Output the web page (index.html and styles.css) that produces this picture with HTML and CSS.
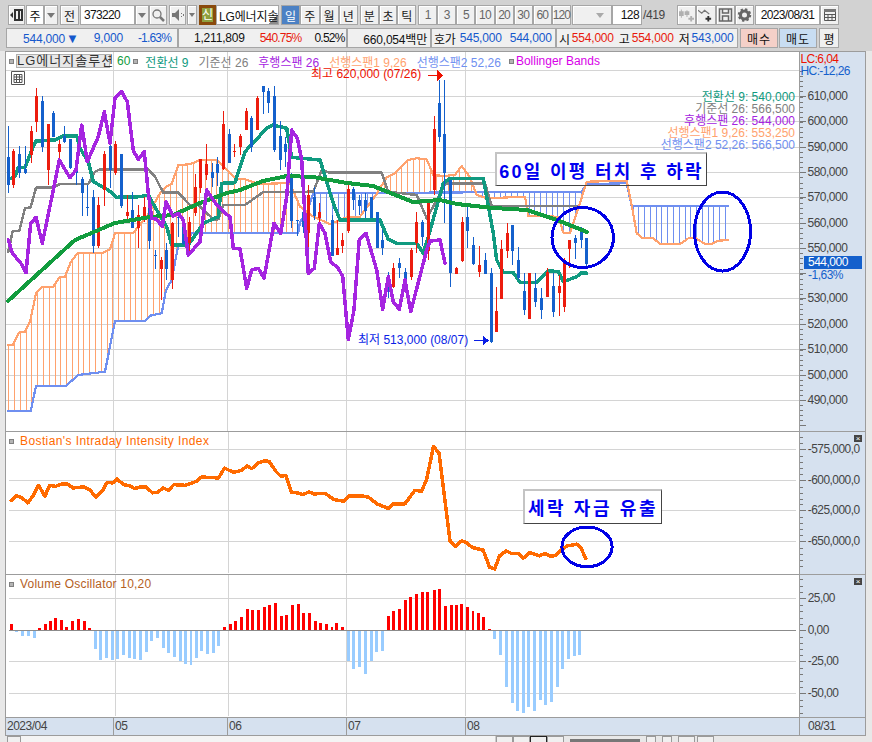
FILE: index.html
```html
<!DOCTYPE html>
<html lang="ko">
<head>
<meta charset="utf-8">
<title>LG에너지솔루션 차트</title>
<link rel="stylesheet" href="styles.css">
</head>
<body>
<div class="app">
  <header class="top">
    <div class="toolbar">
      <button class="btn w17"><svg class="ico" viewBox="0 0 14 14"><path class="i-dark" d="M4 1h9v12H4zM6 3v8h2V3zM10 3v8h1V3zM0 7l3-3v6z"/></svg></button>
      <div class="combo ml1">
        <span class="field w18 center">주</span><span class="btn w14"><i class="caret"></i></span>
      </div>
      <button class="btn w19 ml2">전</button>
      <div class="combo ml1">
        <span class="field w55 code">373220</span><span class="btn w14"><i class="caret"></i></span>
        <button class="btn w18"><svg class="ico" viewBox="0 0 14 14"><circle class="i-line" cx="6" cy="6" r="4"/><path class="i-line thick" d="M9 9l4 4"/></svg></button>
      </div>
      <button class="btn w17 ml2"><svg class="ico" viewBox="0 0 14 14"><path class="i-gray" d="M1 5h3l4-4v12L4 9H1zM10 5h1v1h-1zM10 8h1v1h-1zM12 6h1v2h-1z"/></svg></button>
      <button class="btn w10 ml1"><i class="caret small"></i></button>
      <button class="new-badge ml2">신</button>
      <span class="field name">LG에너지솔</span>
      <div class="seg w77 ml2">
        <button class="btn on">일</button><button class="btn">주</button><button class="btn">월</button><button class="btn">년</button>
      </div>
      <div class="seg w56 ml2">
        <button class="btn">분</button><button class="btn">초</button><button class="btn">틱</button>
      </div>
      <div class="seg w153 ml2 num">
        <button class="btn">1</button><button class="btn">3</button><button class="btn">5</button><button class="btn">10</button><button class="btn">20</button><button class="btn">30</button><button class="btn">60</button><button class="btn">120</button>
      </div>
      <span class="btn w40 ml1 end"><i class="caret light"></i></span>
      <span class="field w30 right">128</span>
      <span class="count">/419</span>
      <div class="seg w77 icons">
        <button class="btn"><svg class="ico" viewBox="0 0 16 14"><path class="i-faint" d="M2 1h1v2h2v5H3v2H2V8H0V3h2zM8 2h1v1h2v4H9v2H8V7H6V3h2zM12 8h2v2h2v2h-2v2h-2v-2h-2v-2h2z"/></svg></button>
        <button class="btn"><svg class="ico" viewBox="0 0 16 14"><path class="i-line" d="M0 2l4 3 3-3 5 4"/><path class="i-dark" d="M10 8h2v2h2v2h-2v2h-2v-2H8v-2h2z"/></svg></button>
        <button class="btn"><svg class="ico" viewBox="0 0 14 14"><path class="i-disk" d="M1 1h12v12H1zM4 1v4h6V1M4 13V8h6v5"/></svg></button>
        <button class="btn"><svg class="ico" viewBox="0 0 14 14"><circle class="i-gear" cx="7" cy="7" r="4"/><circle class="i-teeth" cx="7" cy="7" r="5.5"/></svg></button>
      </div>
      <span class="field date ml1">2023/08/31</span>
      <button class="btn w19"><svg class="ico" viewBox="0 0 14 14"><path class="i-cal" d="M1.500 3.500h11v9h-11zM1.500 6.500h11M5 6.500v6M9 6.500v6M1.500 9.500h11"/><path class="i-gray" d="M1 1h12v3H1z"/></svg></button>
    </div>
    <div class="quote">
      <div class="cell c1">
        <span class="blue">544,000<i class="down">▼</i></span><span class="blue">9,000</span><span class="blue pct">-1.63%</span>
      </div>
      <div class="cell c2">
        <span>1,211,809</span><span class="red pct">540.75%</span><span class="pct">0.52%</span>
      </div>
      <div class="cell c3"><span>660,054백만</span></div>
      <div class="cell c4"><span>호가</span><span class="blue">545,000</span><span class="blue">544,000</span></div>
      <div class="cell c5">
        <span>시</span><span class="red">554,000</span><span class="mark">고</span><span class="red">554,000</span><span class="mark">저</span><span class="blue">543,000</span>
      </div>
      <button class="trade buy">매수</button>
      <button class="trade sell">매도</button>
      <button class="trade avg">평</button>
    </div>
  </header>

  <main class="chart">
    <section class="plot price-plot">
      <svg id="price" class="canvas" viewBox="6 52 793 379"></svg>
      <div class="legend">
        <i class="sq"></i><span class="stock">LG에너지솔루션</span>
        <span class="c-green">60</span><i class="sq"></i>
        <span class="c-teal">전환선 9</span>
        <span class="c-gray">기준선 26</span>
        <span class="c-purple">후행스팬 26</span>
        <span class="c-orange">선행스팬1 9,26</span>
        <span class="c-blue">선행스팬2 52,26</span>
        <i class="sq sq-last"></i><span class="c-magenta">Bollinger Bands</span>
      </div>
      <span class="table-icon"><svg viewBox="0 0 14 14"><path class="i-cal" d="M.5.500h13v13H.500zM3 3.500h8v8H3zM3 6h8M3 8.500h8M5.500 3.500v8M8.500 3.500v8"/></svg></span>
      <div class="callout call-a">60일 이평 터치 후 하락</div>
    </section>
    <aside class="axis">
      <svg id="priceAxis" class="canvas" viewBox="800 52 65 379"></svg>
      <span class="price-tag">544,000</span>
    </aside>

    <section class="plot">
      <svg id="bii" class="canvas" viewBox="6 431 793 143"></svg>
      <div class="legend small"><i class="sq"></i><span class="c-bii">Bostian's Intraday Intensity Index</span></div>
      <div class="callout call-b">세락 자금 유출</div>
    </section>
    <aside class="axis">
      <svg id="biiAxis" class="canvas" viewBox="800 431 65 143"></svg>
      <span class="close">×</span>
    </aside>

    <section class="plot">
      <svg id="vo" class="canvas" viewBox="6 574 793 143"></svg>
      <div class="legend small"><i class="sq"></i><span class="c-vo">Volume Oscillator 10,20</span></div>
    </section>
    <aside class="axis">
      <svg id="voAxis" class="canvas" viewBox="800 574 65 143"></svg>
      <span class="close">×</span>
    </aside>

    <div class="dates">
      <span class="d0">2023/04</span><span class="d1">05</span><span class="d2">06</span><span class="d3">07</span><span class="d4">08</span>
    </div>
    <div class="date-end">08/31</div>
  </main>

  <footer class="status">
    <span class="s-btn w14"></span>
    <span class="track"></span>
    <span class="s-btn w17"></span><span class="s-btn w17"></span><span class="s-btn w17 dark"></span><span class="s-btn w17"></span>
    <span class="slider"></span>
    <span class="s-btn w10 ml6"></span><span class="s-btn w10 ml6"></span><span class="s-btn w17 ml6"></span><span class="s-btn w17 ml2"></span>
  </footer>
</div>
<script src="chart.js"></script>
</body>
</html>
```

FILE: styles.css
```css
* { box-sizing: border-box; }
html, body { margin: 0; padding: 0; }
body {
  width: 872px;
  height: 742px;
  overflow: hidden;
  background: #e8e8e8;
  font-family: "Liberation Sans", "Noto Sans CJK KR", sans-serif;
  font-size: 12px;
  color: #111;
}
button { font: inherit; color: inherit; padding: 0; margin: 0; }
.app { width: 872px; height: 742px; display: flex; flex-direction: column; }

/* top */
.top { height: 51px; background: #d2d2d2; padding: 5px 0 0 8px; }
.toolbar { display: flex; height: 20px; align-items: stretch; }
.btn {
  display: flex; align-items: center; justify-content: center;
  height: 100%;
  background: #f0f0f0;
  border: 1px solid #a6a6a6;
  box-shadow: inset 1px 1px 0 #fff;
  color: #222;
  font-size: 12px;
  white-space: nowrap;
}
.field {
  display: flex; align-items: center;
  background: #fff;
  border: 1px solid #a6a6a6;
  white-space: nowrap;
  overflow: hidden;
}
.combo { display: flex; }
.center { justify-content: center; }
.right { justify-content: flex-end; padding-right: 2px; letter-spacing: -.6px; }
.end { justify-content: flex-end; padding-right: 7px; }
.code { padding-left: 3px; letter-spacing: -.65px; }
.ml1 { margin-left: 1px; }
.ml2 { margin-left: 2px; }
.ml6 { margin-left: 6px; }
.w10 { width: 10px; } .w14 { width: 14px; } .w17 { width: 17px; } .w18 { width: 18px; }
.w19 { width: 19px; } .w30 { width: 30px; } .w40 { width: 40px; } .w55 { width: 55px; }
.w56 { width: 56px; } .w77 { width: 77px; } .w153 { width: 153px; }
.seg { display: flex; height: 100%; }
.seg .btn { flex: 1 1 0; min-width: 0; }
.seg.num .btn { color: #666; letter-spacing: -.8px; }
.seg .on { background: #4c81c4; color: #fff; box-shadow: none; }
.caret {
  width: 0; height: 0;
  border-left: 4.500px solid transparent;
  border-right: 4.500px solid transparent;
  border-top: 5px solid #777;
}
.caret.small { border-left-width: 3.500px; border-right-width: 3.500px; border-top-width: 4px; }
.caret.light { border-top-color: #aaa; }
.ico { width: 14px; height: 14px; display: block; flex: none; }
.icons .ico { width: 15px; height: 14px; }
.i-dark { fill: #333; }
.i-gray { fill: #777; }
.i-faint { fill: #b0b0b0; }
.i-line { fill: none; stroke: #777; stroke-width: 1.300; }
.i-line.thick { stroke-width: 2.500; }
.i-disk { fill: none; stroke: #666; stroke-width: 1.500; }
.i-cal { fill: none; stroke: #555; stroke-width: 1; }
.i-gear { fill: none; stroke: #666; stroke-width: 3; }
.i-teeth { fill: none; stroke: #666; stroke-width: 2.500; stroke-dasharray: 2.200 2.100; }
.new-badge {
  width: 17px;
  background: #8f9f3e;
  border: 3px solid #8a4a0c;
  color: #fff;
  display: flex; align-items: center; justify-content: center;
  line-height: 1;
  font-size: 12px;
}
.name {
  width: 63px; padding-left: 2px; letter-spacing: -.15px;
  background: linear-gradient(135deg, #fff 88%, #8a8a8a 88%);
}
.count { width: 35px; padding-left: 1px; display: flex; align-items: center; color: #444; letter-spacing: -.4px; }
.date { width: 65px; justify-content: center; letter-spacing: -.65px; }

.quote { display: flex; height: 20px; margin: 3px 0 0 -2px; }
.cell {
  display: flex; align-items: center;
  height: 100%;
  background: #f0f0f0;
  border: 1px solid #a6a6a6;
  letter-spacing: -.2px;
  white-space: nowrap;
  overflow: hidden;
}
.blue { color: #1558cc; }
.red { color: #e8190c; }
.pct { letter-spacing: -.8px; }
.down { font-style: normal; font-size: 13px; letter-spacing: 0; margin-left: 1px; }
.c1 { width: 172px; padding-left: 16px; gap: 15px; }
.c2 { width: 169px; padding-left: 15px; gap: 15px; }
.c2 .pct:last-child { margin-left: -2px; }
.c3 { width: 84px; justify-content: flex-end; padding-right: 3px; }
.c4 { width: 125px; padding-left: 2px; gap: 4px; }
.c4 span:last-child { margin-left: 4px; }
.c5 { width: 182px; padding-left: 2px; gap: 2px; }
.mark { margin-left: 3px; }
.trade {
  height: 100%;
  border: 1px solid #a6a6a6;
  margin-left: 2px;
  letter-spacing: 1px;
}
.buy { width: 38px; background: #f5d0c8; }
.sell { width: 38px; margin-left: 1px; background: #c8ddf2; }
.avg { width: 20px; background: #f0f0f0; margin-left: 2px; letter-spacing: 0; }

/* chart */
.chart {
  width: 861px;
  height: 685px;
  margin-left: 5px;
  background: #fff;
  border: 1px solid #9c9c9c;
  border-bottom-width: 1px;
  display: grid;
  grid-template-columns: 793px 66px;
  grid-template-rows: 379px 143px 143px 18px;
}
.plot { position: relative; overflow: hidden; background: #fff; }
.plot + .axis + .plot { border-top: 1px solid #9c9c9c; }
.plot + .axis + .plot .canvas { margin-top: -1px; }
.axis {
  position: relative;
  overflow: hidden;
  background: #d6e1ef;
  border-left: 1px solid #9c9c9c;
}
.plot + .axis + .plot + .axis { border-top: 1px solid #9c9c9c; }
.plot + .axis + .plot + .axis .canvas { margin-top: -1px; }
.canvas { display: block; width: 100%; height: 100%; shape-rendering: crispEdges; }
.plot .canvas { height: 100%; }

.legend {
  position: absolute; left: 3px; top: 2px;
  display: flex; align-items: center; gap: 10px;
  height: 14px;
  white-space: nowrap;
}
.legend.small { top: 2px; gap: 9px; }
.sq { width: 5px; height: 5px; background: #b4b4b4; border: 1px solid #808080; flex: none; margin-right: -3px; }
.sq-last { margin-left: -2px; }
.stock {
  height: 14px; width: 94px;
  margin-left: -5px;
  background: #e8e8e8;
  border: 1px solid #b0b0b0;
  font-size: 13px;
  line-height: 12px;
  letter-spacing: 1px;
  text-align: center;
  color: #333;
}
.c-green { color: #129c3e; margin-left: -3px; margin-right: -7px; }
.c-teal { color: #109a80; }
.c-gray { color: #808080; }
.c-purple { color: #a524e0; }
.c-orange { color: #ffa26e; }
.c-blue { color: #6f8ff0; }
.c-magenta { color: #d800e8; margin-left: -5px; }
.c-bii { color: #ff6a00; letter-spacing: .4px; }
.c-vo { color: #b4601e; letter-spacing: .2px; }
.table-icon { position: absolute; left: 5px; top: 19px; width: 14px; height: 14px; }
.table-icon svg { display: block; width: 100%; height: 100%; }
.callout {
  position: absolute;
  display: flex; align-items: center; justify-content: center;
  border: 2px solid #c4c4c4;
  border-right: 1px solid #444;
  border-bottom: 1px solid #444;
  color: #0000f0;
  font-weight: 700;
  font-size: 18px;
  letter-spacing: 2.300px;
  white-space: nowrap;
}
.call-a { left: 489px; top: 100px; width: 212px; height: 34px; }
.call-b { left: 517px; top: 57px; width: 139px; height: 35px; background: #fff; letter-spacing: 2.600px; }
.price-tag {
  position: absolute; left: 4px; top: 204px;
  width: 58px; height: 13px;
  background: #1460cc; color: #fff;
  line-height: 13px;
  padding-left: 4px;
  letter-spacing: -.5px;
}
.close {
  position: absolute; right: 3px; top: 3px;
  width: 8px; height: 7px;
  background: #444; color: #fff;
  font-size: 8px; line-height: 7px; text-align: center;
}
.dates {
  position: relative;
  background: #d6e1ef;
  border-top: 1px solid #9c9c9c;
  color: #444;
  letter-spacing: -.5px;
  line-height: 17px;
}
.dates span { position: absolute; top: 0; height: 17px; padding-left: 1px; border-left: 1px solid #9c9c9c; }
.dates .d0 { left: 0; border-left: 0; }
.dates .d1 { left: 107px; }
.dates .d2 { left: 221px; }
.dates .d3 { left: 340px; }
.dates .d4 { left: 459px; }
.date-end {
  background: #d6e1ef;
  border-top: 1px solid #9c9c9c;
  border-left: 1px solid #9c9c9c;
  color: #444;
  padding-left: 8px;
  letter-spacing: -.5px;
  line-height: 17px;
}

/* status */
.status {
  height: 6px; overflow: hidden;
  display: flex; align-items: flex-start;
  padding-left: 7px;
  background: #e8e8e8;
}
.s-btn { height: 8px; background: #f0f0f0; border: 1px solid #9a9a9a; flex: none; }
.s-btn.dark { background: #eee; border-color: #222; }
.track { width: 475px; height: 6px; background: #f4f4f4; border-right: 1px solid #ccc; flex: none; }
.slider { width: 70px; height: 3px; margin: 3px 0 0 6px; background: #777; flex: none; }

/* svg marks */
.grid { stroke: #d4d4d4; stroke-width: 1; fill: none; }
.call-bg { fill: #fff; }
.zero { stroke: #8a8a8a; stroke-width: 1; }
.hatch-o { stroke: #ffa26e; stroke-width: 1; }
.hatch-b { stroke: #6f8ff0; stroke-width: 1; }
.ln { fill: none; stroke-linejoin: round; stroke-linecap: round; }
.ln-orange { stroke: #ffa26e; stroke-width: 2.200; }
.ln-blue { stroke: #6f8ff0; stroke-width: 2.200; }
.ln-gray { stroke: #808080; stroke-width: 2.500; }
.ln-teal { stroke: #109a80; stroke-width: 3.500; }
.ln-green { stroke: #119c3e; stroke-width: 4; }
.ln-purple { stroke: #a524e0; stroke-width: 3.500; }
.ln-bii { stroke: #ff6a00; stroke-width: 3.500; }
.ring { fill: none; stroke: #0000e6; stroke-width: 3; }
.up { fill: #ec1c0e; stroke: #ec1c0e; stroke-width: 0; }
.dn { fill: #1460cc; stroke: #1460cc; stroke-width: 0; }
.vo-r { fill: #ff0000; }
.vo-b { fill: #99ccff; }
.t { font-size: 12px; font-family: "Liberation Sans", "Noto Sans CJK KR", sans-serif; }
.t-red { fill: #ee1100; }
.t-blu { fill: #0a1ee6; }
.t-end { text-anchor: end; }
.f-teal { fill: #109a80; } .f-gray { fill: #808080; } .f-purple { fill: #a524e0; }
.f-orange { fill: #ffa26e; } .f-blue { fill: #6f8ff0; }
.tick { stroke: #777; stroke-width: 1; }
.ax { fill: #444; letter-spacing: -.5px; }
.ax-lc { fill: #ee1100; letter-spacing: -.6px; }
.ax-hc { fill: #1460cc; letter-spacing: -.6px; }
.ax-pct { fill: #1460cc; letter-spacing: -.5px; }
.arrow { fill: #ee1100; }
.arrow-b { fill: #0a1ee6; }
.arrow-line { stroke: #ee1100; stroke-width: 1.500; }
.arrow-line-b { stroke: #0a1ee6; stroke-width: 1; }
```

FILE: chart.js
```js
const NS = 'http://www.w3.org/2000/svg';
function add(svg, tag, attrs, text) {
  const el = document.createElementNS(NS, tag);
  for (const k in attrs) el.setAttribute(k, attrs[k]);
  if (text !== undefined) el.textContent = text;
  svg.appendChild(el);
  return el;
}
const zoom = (ox, oy, pts) => pts.map(([x, y]) => [ox + x / 3, oy + y / 3]);
const A = pts => zoom(0, 80, pts);      // left half of the price pane
const B = pts => zoom(280, 80, pts);    // middle of the price pane
const C = pts => zoom(570, 150, pts);   // right end of the cloud
const line = (svg, pts, cls) =>
  add(svg, 'polyline', { class: 'ln ' + cls, points: pts.map(p => p[0].toFixed(1) + ',' + p[1].toFixed(1)).join(' ') });
const yAt = (pts, x) => {
  for (let i = 1; i < pts.length; i++) {
    if (x <= pts[i][0]) {
      const [x0, y0] = pts[i - 1], [x1, y1] = pts[i];
      return y0 + (y1 - y0) * (x - x0) / (x1 - x0 || 1);
    }
  }
  return null;
};

const GRID_X = [113.5, 227.5, 346.5, 465.5];
function grid(svg, ys, top, bottom) {
  GRID_X.forEach(x => add(svg, 'line', { class: 'grid', x1: x, x2: x, y1: top, y2: bottom }));
  ys.forEach(y => add(svg, 'line', { class: 'grid', x1: 6, x2: 799, y1: y, y2: y }));
}
function axis(svg, first, step, count, minor, top, bottom, labels) {
  for (let y = first - minor * 20; y < bottom; y += minor) {
    if (y > top) add(svg, 'line', { class: 'tick', x1: 800, x2: 803, y1: Math.round(y) + .5, y2: Math.round(y) + .5 });
  }
  labels.forEach(([y, t]) => {
    add(svg, 'line', { class: 'tick', x1: 800, x2: 806, y1: y, y2: y });
    if (t) add(svg, 'text', { class: 't ax', x: 807.5, y: y + 3.5 }, t);
  });
}

/* ---------- price pane ---------- */
const price = document.getElementById('price');
const PRICE_Y = [70.5, 96.5, 121.5, 147.5, 172.5, 197.5, 223.5, 248.5, 273.5, 298.5, 324.5, 349.5, 375.5, 400.5];
grid(price, PRICE_Y, 52, 431);
add(price, 'rect', { class: 'call-bg', x: 495, y: 152, width: 212, height: 34 });

const orange = [...A([[25,795],[38,795],[58,757],[75,755],[90,725],[108,640],[127,620],[160,620],[180,590],[195,590],[212,547],[232,520],[310,518],[330,508],[345,460],[400,458],[440,410],[480,340],[498,320],[515,312],[535,255],[570,253],[600,240],[650,240],[680,268],[705,295],[735,298],[775,312],[845,310]]),
  ...B([[30,310],[60,380],[100,410],[150,432],[205,410],[240,410],[290,342],[320,292],[345,280],[385,240],[410,235],[440,238],[460,285],[490,288],[525,285],[545,258],[570,292],[590,345],[620,355],[735,350],[745,408],[835,410],[850,458],[870,458],[890,400],[920,305]]),
  ...C([[170,92],[185,165],[200,250],[218,265],[250,265],[270,282],[330,282],[355,265],[375,263],[405,282],[425,282],[445,272],[475,270]])];
const span2 = [...A([[25,993],[92,993],[108,918],[197,918],[235,885],[315,875],[345,723],[435,722],[450,707],[485,700],[498,630],[515,600],[535,495],[560,495],[575,458],[895,458]]),
  ...B([[60,425],[80,400],[100,340],[905,335],[920,312]]),
  ...C([[170,100],[185,168],[475,168]])];
for (let i = 0; i < 125; i++) {
  const x = Math.round(8.3 + 5.78 * i) + .5;
  const a = yAt(orange, x), b = yAt(span2, x);
  if (a === null || b === null || Math.abs(a - b) < 1.5) continue;
  if (x > 495 && x < 707 && Math.min(a, b) < 186) continue;
  add(price, 'line', { class: a < b ? 'hatch-o' : 'hatch-b', x1: x, x2: x, y1: a, y2: b });
}
line(price, span2, 'ln-blue');
line(price, orange, 'ln-orange');

line(price, [...A([[25,515],[38,453],[58,452],[75,385],[92,382],[108,323],[160,323],[180,312],[265,312],[285,275],[300,268],[445,268],[465,290],[490,338],[535,338],[570,375],[595,375],[640,418],[655,418],[670,375],[735,375],[790,336]]),
  ...B([[0,336],[100,335],[125,270],[150,278],[305,278],[325,335],[410,345],[440,415],[490,325],[495,310],[615,310],[635,378],[890,378]])], 'ln-gray');
line(price, [...A([[25,298],[45,290],[55,262],[75,262],[100,200],[108,183],[165,180],[190,168],[230,168],[240,205],[265,245],[280,305],[325,330],[350,352],[420,350],[445,345],[470,390],[500,440],[515,495],[565,495],[610,430],[655,410],[665,310],[705,308],[735,215],[800,145],[820,135]]),
  ...B([[0,140],[20,145],[35,232],[120,240],[160,370],[180,420],[300,420],[325,478],[350,490],[410,490],[430,520],[445,470],[490,310],[510,295],[610,295],[640,460],[650,540],[670,578],[700,578],[720,607],[770,607],[805,572],[835,575],[850,605],[890,590],[905,578],[920,580]])], 'ln-teal');

/* x, wick top, body top, body bottom, wick bottom, rising? */
const candles = [
 ...[[25,138,232,314,340,0],[40,207,213,315,325,1],[58,197,222,278,294,0],[76,197,268,278,282,0],[92,138,153,225,248,1],[109,25,48,125,155,1],[127,48,63,200,215,0],[143,132,132,270,315,1],[160,93,99,172,172,0],[178,180,192,216,240,1],[193,138,168,186,190,0],[211,178,178,265,268,0],[229,232,262,278,315,0],[245,290,297,340,408,0],[262,315,381,383,408,0],[280,330,351,498,520,0],[295,352,376,498,505,1],[313,213,222,330,378,1],[331,185,198,270,325,0],[346,183,193,280,285,1],[364,222,222,378,385,0],[382,345,396,408,430,1],[397,336,390,443,445,0],[415,375,405,445,505,1],[433,352,381,420,425,1],[448,362,365,482,508,0],[466,510,525,527,568,0],[484,530,540,568,660,1],[499,490,510,568,600,0],[517,425,428,600,628,1],[535,395,410,413,470,0],[550,420,430,492,495,0],[568,410,427,490,528,1],[586,282,320,400,408,1],[601,237,238,323,340,1],[619,192,252,285,300,1],[637,250,277,293,320,0],[652,232,252,280,318,0],[670,93,132,268,270,1],[688,148,162,248,250,0],[703,192,213,215,232,1],[721,162,168,200,225,1],[739,85,93,150,150,1],[754,108,114,200,215,0],[772,48,54,150,150,1],[790,18,18,35,102,0],[805,25,32,70,100,0],[823,18,48,210,215,0],[841,123,168,240,270,0],[856,170,192,217,262,0],[874,278,282,422,445,0],[892,420,421,423,468,0]].map(c => [c[0] / 3, ...c.slice(1, 5).map(v => 80 + v / 3), c[5]]),
 ...[[68,390,395,440,460,0],[85,315,345,460,515,1],[103,320,350,408,420,0],[118,370,395,415,455,1],[155,405,420,528,528,0],[170,420,505,525,525,1],[187,460,480,498,520,1],[205,305,328,452,460,1],[220,320,328,360,390,0],[238,345,360,378,405,0],[256,338,360,392,415,0],[274,350,352,413,415,0],[290,395,397,505,505,0],[307,450,480,505,525,0],[325,575,590,625,655,0],[340,550,565,620,625,1],[358,535,548,565,595,0],[376,565,575,600,625,0],[392,505,510,590,600,1],[409,395,427,490,520,1],[427,420,427,470,498,0],[443,360,360,513,540,1],[461,108,148,330,345,1],[478,0,68,170,185,0],[493,0,163,280,428,0],[511,300,300,580,620,0],[529,560,565,582,582,1],[545,410,427,542,545,1],[562,368,410,453,505,0],[580,470,495,552,555,0],[596,497,555,575,590,1],[614,520,540,582,582,0],[632,565,578,785,790,0],[647,620,693,755,755,1],[664,480,508,658,658,1],[682,428,460,513,535,1],[697,435,435,513,556,0],[715,500,540,595,600,0],[733,580,633,690,705,0],[748,580,580,718,718,1],[766,580,623,665,680,0],[784,625,653,690,718,0],[800,565,577,650,650,1],[818,580,618,695,710,0],[836,585,618,640,708,1],[851,535,545,680,695,1],[868,480,480,507,565,1],[886,465,475,490,538,0],[902,440,445,480,505,0],[919,475,475,553,560,0]].map(c => [280 + c[0] / 3, ...c.slice(1, 5).map(v => 80 + v / 3), c[5]])
];
candles.forEach(([x, wt, bt, bb, wb, up]) => {
  const px = Math.round(x);
  const cls = up ? 'up' : 'dn';
  add(price, 'rect', { class: cls, x: px, y: wt, width: 1, height: Math.max(wb - wt, 1) });
  add(price, 'rect', { class: cls, x: px - 1, y: bt, width: 3, height: Math.max(bb - bt, 1) });
});

line(price, [[8,301],[53,260],[75,240],[115,223],[150,217],[173,215],[200,203],[227,193],[240,190],[263,181],[287,176],[313,177],[347,183],[373,186],[413,202],[440,200],[457,204],[493,208],[527,210],[557,220],[587,232]], 'ln-green');
line(price, [...A([[25,480],[38,522],[60,545],[78,578],[92,430],[108,412],[127,490],[160,330],[178,240],[210,293],[228,270],[245,135],[262,245],[295,170],[313,95],[330,190],[345,55],[365,35],[382,65],[400,212],[415,238],[433,215],[445,340],[455,415],[470,418],[487,440],[498,365],[518,408],[535,400],[550,420],[565,525],[600,485],[620,330],[650,375],[690,412],[700,505],[720,507],[740,625],[755,570],[775,565],[792,595],[822,430],[842,460],[860,350]]),
  ...B([[35,150],[52,175],[65,240],[85,580],[103,565],[118,430],[135,460],[152,545],[175,565],[188,590],[205,778],[222,690],[238,478],[258,460],[290,570],[308,688],[325,590],[340,665],[358,688],[375,600],[392,695],[440,510],[450,483],[480,480],[495,550]])], 'ln-purple');
add(price, 'ellipse', { class: 'ring', cx: 582.7, cy: 237.5, rx: 30.7, ry: 30 });
add(price, 'ellipse', { class: 'ring', cx: 722.5, cy: 231.5, rx: 28, ry: 39.5 });

[['f-teal','전환선 9: 540,000',101],['f-gray','기준선 26: 566,500',113],['f-purple','후행스팬 26: 544,000',125],['f-orange','선행스팬1 9,26: 553,250',137],['f-blue','선행스팬2 52,26: 566,500',149]]
  .forEach(([c, t, y]) => add(price, 'text', { class: 't t-end ' + c, x: 795, y }, t));
add(price, 'text', { class: 't t-red', x: 311, y: 78 }, '최고 620,000 (07/26)');
add(price, 'line', { class: 'arrow-line', x1: 428, x2: 438, y1: 75.5, y2: 75.5 });
add(price, 'polygon', { class: 'arrow', points: '437,70 443,75.500 437,81' });
add(price, 'text', { class: 't t-blu', x: 358, y: 344 }, '최저 513,000 (08/07)');
add(price, 'line', { class: 'arrow-line-b', x1: 474, x2: 484, y1: 340.5, y2: 340.5 });
add(price, 'polygon', { class: 'arrow-b', points: '483,336 489,340.500 483,345' });

const pa = document.getElementById('priceAxis');
const priceLabels = ['610,000','600,000','590,000','580,000','570,000','560,000','550,000','','530,000','520,000','510,000','500,000','490,000']
  .map((t, i) => [PRICE_Y[i + 1], t]);
axis(pa, 96.5, 25.3, 13, 5.06, 70, 427, priceLabels);
add(pa, 'line', { class: 'tick', x1: 800, x2: 806, y1: 425.5, y2: 425.5 });
add(pa, 'text', { class: 't ax-lc', x: 800.5, y: 63 }, 'LC:6,04');
add(pa, 'text', { class: 't ax-hc', x: 800.5, y: 75 }, 'HC:-12,26');
add(pa, 'text', { class: 't ax-pct', x: 808, y: 279 }, '-1,63%');

/* ---------- BII pane ---------- */
const bii = document.getElementById('bii');
grid(bii, [449.5, 480.5, 511.5, 542.5], 431, 574);
line(bii, [...zoom(0, 425, [[25,228],[40,213],[58,220],[76,235],[92,212],[108,182],[127,215],[142,182],[160,185],[178,178],[195,178],[212,190],[245,187],[262,195],[282,218],[300,200],[315,173],[332,175],[345,163],[365,180],[382,183],[398,192],[415,187],[433,187],[452,205],[468,203],[484,190],[500,197],[517,180],[550,182],[585,170],[600,157],[652,160],[670,130],[697,143],[720,137],[738,124],[752,132],[770,115],[790,108],[805,110],[825,140],[840,155],[855,152],[872,203],[890,205],[907,210],[925,202],[940,208],[975,207],[1000,225],[1030,230],[1045,214],[1085,214],[1105,218],[1130,238],[1165,252],[1180,238],[1215,238],[1245,197],[1265,200],[1280,165]]),
  ...zoom(432, 425, [[5,65],[22,85],[30,150],[45,270],[55,350],[72,367],[90,350],[105,355],[122,370],[155,378],[175,430],[190,435],[205,395],[225,380],[240,388],[262,388],[277,402],[295,385],[325,395],[343,388],[360,397],[375,393],[392,375],[410,365],[438,360],[450,370],[465,403]])], 'ln-bii');
add(bii, 'ellipse', { class: 'ring', cx: 588.3, cy: 547.7, rx: 25.3, ry: 20 });

const ba = document.getElementById('biiAxis');
axis(ba, 449.5, 31, 4, 6.2, 431, 574, [[449.5,'-575,000,0'],[480.5,'-600,000,0'],[511.5,'-625,000,0'],[542.5,'-650,000,0']]);

/* ---------- volume oscillator pane ---------- */
const vo = document.getElementById('vo');
grid(vo, [598.5, 662.5, 694.5], 574, 717);
add(vo, 'line', { class: 'zero', x1: 6, x2: 799, y1: 630.5, y2: 630.5 });
const bars = [
 ...[[25,597],[40,623],[58,635],[76,635],[92,641],[109,609],[127,597],[143,588],[160,579],[178,585],[193,606],[211,588],[229,582],[245,588],[262,609],[280,675],[295,707],[313,701],[331,707],[346,704],[364,692],[382,701],[397,704],[415,707],[433,683],[448,650],[466,641],[484,671],[499,686],[517,698],[535,711],[550,719],[568,722],[586,701],[601,680],[619,689],[637,686],[652,665],[670,606],[688,597],[703,588],[721,576],[739,552],[754,555],[772,555],[790,546],[805,540],[823,534],[841,573],[856,570],[874,540],[892,537],[907,564],[925,564],[943,588],[958,594],[976,597],[994,606],[1009,594],[1027,606],[1045,711],[1060,734],[1078,728],[1096,749],[1114,711],[1129,683],[1147,680],[1165,573],[1180,558],[1198,552],[1216,525],[1231,516],[1249,507],[1267,501],[1282,501]],
 ...[[5,495],[22,492],[38,543],[56,540],[73,540],[88,537],[106,546],[124,558],[140,564],[157,576],[175,612],[190,644],[208,692],[226,788],[242,836],[259,860],[277,866],[292,848],[310,860],[328,827],[343,842],[361,833],[379,788],[394,734],[412,704],[430,695],[445,692]].map(([x, y]) => [x + 1296, y])
];
bars.forEach(([zx, zy]) => {
  const x = Math.round(zx / 3);
  const y = 425 + zy / 3;
  const zero = 630;
  if (y < zero) add(vo, 'rect', { class: 'vo-r', x: x - 1, y, width: 3, height: zero - y + .5 });
  else add(vo, 'rect', { class: 'vo-b', x: x - 1, y: zero + 1, width: 3, height: y - zero - 1 });
});
const va = document.getElementById('voAxis');
axis(va, 598.5, 32, 4, 6.4, 574, 717, [[598.5,'25,00'],[630.5,'0,00'],[662.5,'-25,00'],[694.5,'-50,00']]);
```
